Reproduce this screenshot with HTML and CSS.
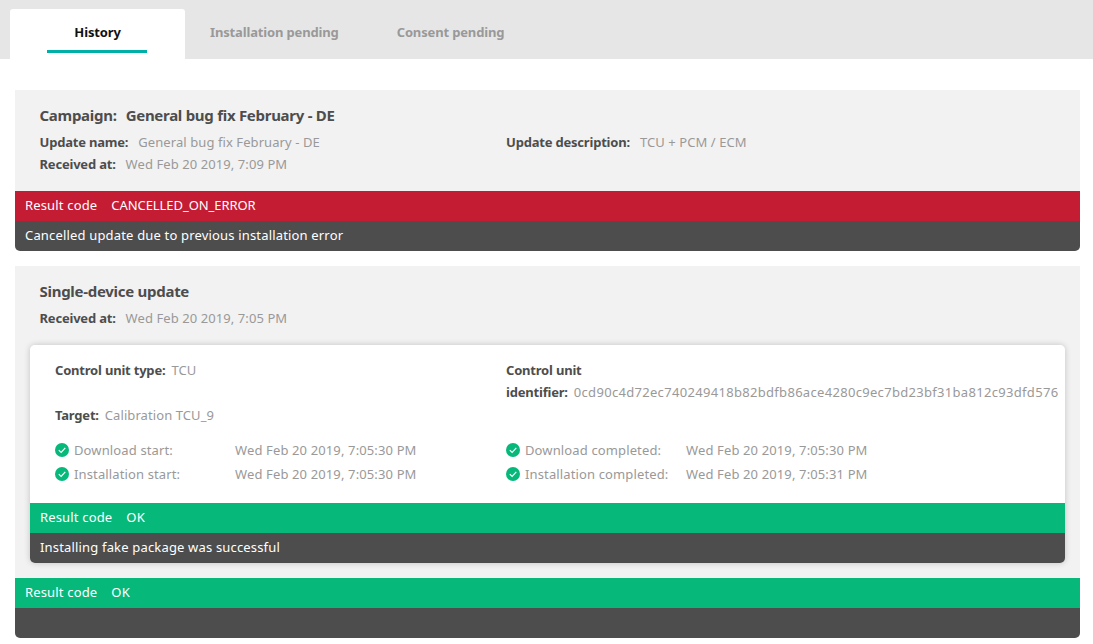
FILE: index.html
```html
<!DOCTYPE html>
<html lang="en">
<head>
  <meta charset="UTF-8">
  <title>Update history</title>
  <link rel="stylesheet" href="styles.css">
</head>
<body>

  <nav class="tabs">
    <a class="tab tab-active"><span class="tab-label">History</span></a>
    <a class="tab tab-install"><span class="tab-label">Installation pending</span></a>
    <a class="tab tab-consent"><span class="tab-label">Consent pending</span></a>
  </nav>

  <main class="history">

    <section class="card">
      <div class="card-body">
        <h2 class="card-title"><span class="title-key">Campaign:</span>General bug fix February - DE</h2>
        <div class="columns">
          <div>
            <p class="row"><b>Update name:</b><span>General bug fix February - DE</span></p>
            <p class="row"><b>Received at:</b><span>Wed Feb 20 2019, 7:09 PM</span></p>
          </div>
          <div>
            <p class="row"><b>Update description:</b><span>TCU + PCM / ECM</span></p>
          </div>
        </div>
      </div>
      <div class="result result-error"><span>Result code</span><span class="result-value">CANCELLED_ON_ERROR</span></div>
      <div class="message">Cancelled update due to previous installation error</div>
    </section>

    <section class="card">
      <div class="card-body card-body-single">
        <h2 class="card-title">Single-device update</h2>
        <p class="row"><b>Received at:</b><span>Wed Feb 20 2019, 7:05 PM</span></p>
      </div>

      <div class="device">
        <div class="device-body">
          <div class="columns device-columns device-info">
            <div>
              <p class="row row-tight"><b>Control unit type:</b><span>TCU</span></p>
            </div>
            <div>
              <p class="row"><b>Control unit</b></p>
              <p class="row row-tight"><b>identifier:</b><span class="hash">0cd90c4d72ec740249418b82bdfb86ace4280c9ec7bd23bf31ba812c93dfd576</span></p>
            </div>
          </div>
          <p class="row row-tight device-target"><b>Target:</b><span>Calibration TCU_9</span></p>
          <div class="columns device-columns">
            <div>
              <div class="step">
                <svg class="check" viewBox="0 0 14 14"><circle cx="7" cy="7" r="7"/><path d="M3.8 7.2l2.3 2.3 4.2-4.6"/></svg>
                <span class="step-name">Download start:</span><span>Wed Feb 20 2019, 7:05:30 PM</span>
              </div>
              <div class="step">
                <svg class="check" viewBox="0 0 14 14"><circle cx="7" cy="7" r="7"/><path d="M3.8 7.2l2.3 2.3 4.2-4.6"/></svg>
                <span class="step-name">Installation start:</span><span>Wed Feb 20 2019, 7:05:30 PM</span>
              </div>
            </div>
            <div>
              <div class="step">
                <svg class="check" viewBox="0 0 14 14"><circle cx="7" cy="7" r="7"/><path d="M3.8 7.2l2.3 2.3 4.2-4.6"/></svg>
                <span class="step-name">Download completed:</span><span>Wed Feb 20 2019, 7:05:30 PM</span>
              </div>
              <div class="step">
                <svg class="check" viewBox="0 0 14 14"><circle cx="7" cy="7" r="7"/><path d="M3.8 7.2l2.3 2.3 4.2-4.6"/></svg>
                <span class="step-name">Installation completed:</span><span>Wed Feb 20 2019, 7:05:31 PM</span>
              </div>
            </div>
          </div>
        </div>
        <div class="result result-ok"><span>Result code</span><span>OK</span></div>
        <div class="message">Installing fake package was successful</div>
      </div>

      <div class="result result-ok"><span>Result code</span><span>OK</span></div>
      <div class="message"></div>
    </section>

  </main>

</body>
</html>
```

FILE: styles.css
```css
html, body {
  height: 644px;
  overflow: hidden;
}

body {
  margin: 0;
  background-color: #fff;
  font-family: "Noto Sans", sans-serif;
  font-size: 13px;
  letter-spacing: -0.2px;
  color: #4d4d4d;
}

p, h2 {
  margin: 0;
}

/* tabs */
.tabs {
  display: flex;
  height: 50px;
  padding: 9px 0 0 10px;
  background-color: #e6e6e6;
}

.tab {
  position: relative;
  height: 50px;
  line-height: 46px;
  font-weight: 700;
  letter-spacing: -0.15px;
  color: #999;
}

.tab-active {
  width: 175px;
  text-align: center;
  background-color: #fff;
  border-radius: 3px 3px 0 0;
  color: #111;
}

.tab-active::after {
  content: "";
  position: absolute;
  left: 37px;
  bottom: 6px;
  width: 100px;
  height: 3px;
  background-color: #00b0a8;
}

.tab-install {
  margin-left: 25px;
}

.tab-consent {
  margin-left: 58px;
}

/* cards */
.history {
  padding: 31px 13px 0 15px;
}

.card {
  margin-bottom: 15px;
  background-color: #f2f2f2;
  border-radius: 0 0 5px 5px;
  overflow: hidden;
}

.card-body {
  height: 101px;
  padding: 0 24.5px;
  box-sizing: border-box;
}

.card-body-single {
  height: 79px;
}

.card-title {
  height: 22px;
  padding-top: 14px;
  margin-bottom: 5px;
  font-size: 15px;
  line-height: 22px;
  font-weight: 700;
  letter-spacing: -0.28px;
}

.title-key {
  margin-right: 9px;
}

.columns {
  display: grid;
  grid-template-columns: 466.5px 1fr;
}

.device-columns {
  grid-template-columns: 451px 1fr;
}

.row {
  height: 22px;
  line-height: 22px;
  white-space: nowrap;
}

.row b {
  margin-right: 10px;
}

.row span {
  letter-spacing: 0.08px;
  color: #999;
}

.row .hash {
  letter-spacing: 0.31px;
}

.row-tight b {
  margin-right: 6px;
}

/* nested device card */
.device {
  margin: 0 15px 15px;
  border-radius: 5px;
  overflow: hidden;
  box-shadow: 0 0 6px rgba(0, 0, 0, 0.2);
}

.device-body {
  height: 158px;
  padding: 14px 0 0 25px;
  box-sizing: border-box;
  background-color: #fff;
}

.device-info {
  height: 44px;
}

.device-target {
  margin: 1px 0 12px;
}

.step {
  display: flex;
  align-items: center;
  height: 24px;
  letter-spacing: 0.13px;
  color: #999;
  white-space: nowrap;
}

.check {
  flex: none;
  width: 14px;
  height: 14px;
  margin-right: 5px;
}

.check circle {
  fill: #07b87b;
}

.check path {
  fill: none;
  stroke: #fff;
  stroke-width: 1.2;
}

.step-name {
  width: 161px;
}

/* result bars */
.result {
  display: flex;
  gap: 14px;
  height: 30px;
  padding-left: 10px;
  line-height: 28px;
  letter-spacing: 0.16px;
  color: #fff;
}

.result-value {
  letter-spacing: -0.06px;
}

.result-error {
  background-color: #c41c33;
}

.result-ok {
  background-color: #07b87b;
}

.message {
  height: 30px;
  padding-left: 10px;
  line-height: 28px;
  letter-spacing: 0.17px;
  background-color: #4d4d4d;
  color: #fff;
}
```
